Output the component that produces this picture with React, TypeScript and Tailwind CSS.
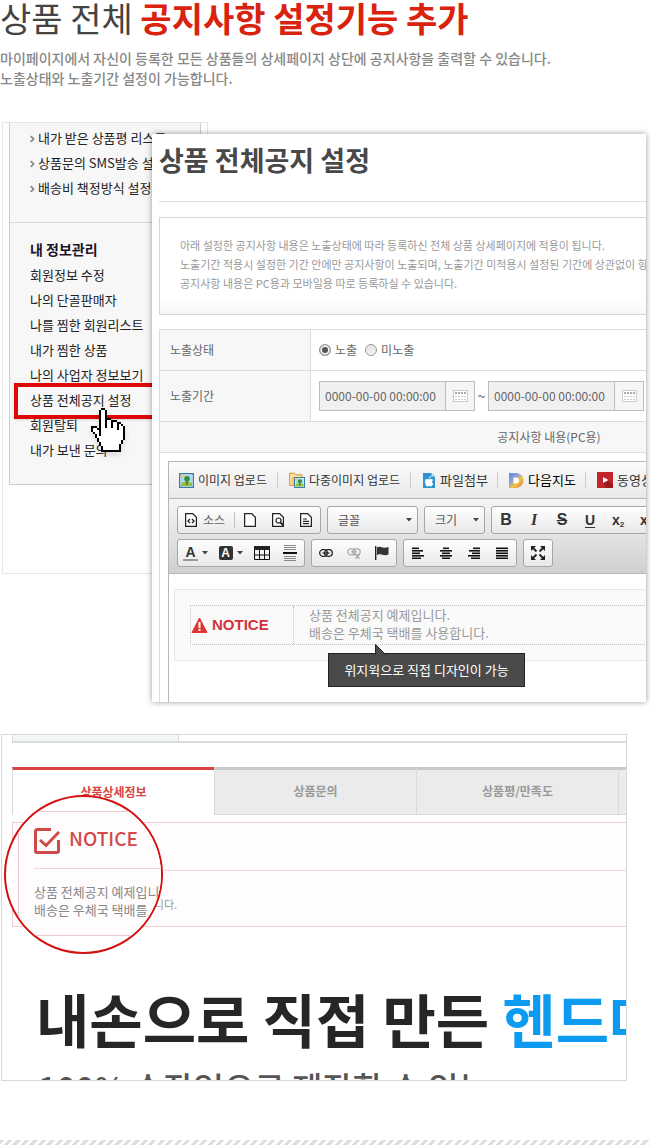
import { useState, type ReactNode } from "react";
import clsx from "clsx";

const sideLinks = ["내가 받은 상품평 리스트", "상품문의 SMS발송 설정", "배송비 책정방식 설정"];

const infoLinks = [
    "회원정보 수정",
    "나의 단골판매자",
    "나를 찜한 회원리스트",
    "내가 찜한 상품",
    "나의 사업자 정보보기",
    "상품 전체공지 설정",
    "회원탈퇴",
    "내가 보낸 문의",
];

const detailTabs = ["상품상세정보", "상품문의", "상품평/만족도", ""];

// X = outline, . = fill
const handPixels = [
    "     XX",
    "    X..X",
    "    X..X",
    "    X..X",
    "    X..X",
    "    X..XXX",
    "    X..X..XXX",
    "    X..X..X..XX",
    "    X..X..X..X.X",
    "XXX X..X..X..X..X",
    "X..XX........X..X",
    "X...X...........X",
    " X..X...........X",
    "  X.X...........X",
    "  X.............X",
    "   X............X",
    "   X...........X",
    "    X..........X",
    "    X.........X",
    "     X........X",
    "     X........X",
    "     XXXXXXXXXX",
];

function HandCursor() {
    return (
        <svg
            width="34"
            height="44"
            viewBox="0 0 17 22"
            shapeRendering="crispEdges"
            className="absolute left-[81px] top-[285px] drop-shadow-md"
            aria-hidden="true"
        >
            {handPixels.flatMap((row, y) =>
                row.split("").map((c, x) =>
                    c === " " ? null : (
                        <rect key={`${x}-${y}`} x={x} y={y} width="1" height="1" fill={c === "X" ? "#000" : "#fff"} />
                    )
                )
            )}
        </svg>
    );
}

function Icon({ children, w = 16, h = 16 }: { children: ReactNode; w?: number; h?: number }) {
    return (
        <svg width={w} height={h} viewBox={`0 0 ${w} ${h}`} fill="none" className="shrink-0" aria-hidden="true">
            {children}
        </svg>
    );
}

function Caret() {
    return (
        <Icon w={6} h={4}>
            <path d="M0 0h6L3 3.5z" fill="#444" />
        </Icon>
    );
}

function PageIcon({ children }: { children?: ReactNode }) {
    return (
        <Icon w={12} h={14}>
            <path d="M.6.6h7L11.400 4.400v9H.6z" stroke="#222" strokeWidth="1.300" fill="#fff" />
            {children}
        </Icon>
    );
}

function TreePicture({ x, y, s }: { x: number; y: number; s: number }) {
    return (
        <g transform={`translate(${x} ${y}) scale(${s / 15})`}>
            <rect x=".7" y=".7" width="13.6" height="13.6" fill="#fff" stroke="#3f7ba3" strokeWidth="1.4" />
            <rect x="2" y="2" width="11" height="11" fill="#a9dcf3" />
            <path d="M2 2h4L2 6z" fill="#f6c453" />
            <path d="M2 10c4-2 7-2 11 0v3H2z" fill="#8cc63f" />
            <path d="M7.3 7h1.2v5H7.3z" fill="#6b4a1e" />
            <circle cx="8" cy="5.8" r="2.8" fill="#2f8f3a" />
        </g>
    );
}

function Group({ children, className }: { children: ReactNode; className?: string }) {
    return (
        <div
            className={clsx(
                "flex h-7 shrink-0 items-center rounded-[3px] border border-[#a6a6a6] bg-gradient-to-b from-white to-[#e8e8e8]",
                className
            )}
        >
            {children}
        </div>
    );
}

function ToolButton({ label, children, wide }: { label: string; children: ReactNode; wide?: boolean }) {
    return (
        <button
            type="button"
            aria-label={label}
            className={clsx("flex h-full items-center justify-center gap-1", wide ? "w-[35px]" : "w-7")}
        >
            {children}
        </button>
    );
}

function ToolSelect({ label, className }: { label: string; className: string }) {
    return (
        <Group className={clsx("relative", className)}>
            <select aria-label={label} className="h-full w-full appearance-none pl-[10px] text-xs text-[#555] outline-none">
                <option>{label}</option>
            </select>
            <span className="pointer-events-none absolute right-[5px]">
                <Caret />
            </span>
        </Group>
    );
}

function AlignIcon({ rows }: { rows: [number, number][] }) {
    return (
        <Icon w={12} h={12}>
            {rows.map(([x, w], i) => (
                <rect key={i} x={x} y={i * 2.5 + 0.5} width={w} height="1.6" fill="#111" />
            ))}
        </Icon>
    );
}

function UploadBar() {
    const item = "flex items-center gap-1 border-r border-[#ccc] h-4";
    return (
        <div className="flex h-[38px] items-center border-y border-[#b6b6b6] bg-gradient-to-b from-[#fbfbfb] to-[#e9e9e9] pl-[10px] text-xs text-[#333]">
            <button type="button" className={clsx(item, "w-[99px]")}>
                <Icon w={15} h={15}>
                    <TreePicture x={0} y={0} s={15} />
                </Icon>
                이미지 업로드
            </button>
            <button type="button" className={clsx(item, "w-[133px] pl-[11px]")}>
                <Icon>
                    <path d="M.6 1.200h5l1.400 1.600h6v10.600H.6z" fill="#fbe3a0" stroke="#d39a2e" />
                    <path d="M2.500 5h10v7.500h-10z" fill="#f4c964" />
                    <TreePicture x={5} y={5} s={11} />
                </Icon>
                다중이미지 업로드
            </button>
            <button type="button" className={clsx(item, "w-[87px] pl-[11px] text-[13px]")}>
                <Icon w={14} h={15}>
                    <path d="M1 0h8.500L13 3.500V15H1z" fill="#2f94d3" />
                    <path d="M9.500 0L13 3.500H9.500z" fill="#bfe3f8" />
                    <path d="M3 8.200c0-1.400 1-2.200 2.200-2.200 1 0 1.400.4 2 .4s1-.4 2-.4c.9 0 1.500.4 1.900 1-1.600 1-1.300 3 .2 3.600-.5 1.500-1.400 2.900-2.400 2.900-.6 0-.9-.4-1.700-.4s-1.100.4-1.700.4C4.100 13.500 3 10.600 3 8.200z" fill="#fff" />
                    <path d="M7 5.500c0-1.300.8-2.200 2-2.400 0 1.300-.8 2.300-2 2.400z" fill="#fff" />
                </Icon>
                파일첨부
            </button>
            <button type="button" className={clsx(item, "w-[88px] pl-[11px] text-[13px] text-black")}>
                <Icon w={15} h={15}>
                    <defs>
                        <linearGradient id="daum" x1="0" y1="0" x2="1" y2="1">
                            <stop offset="0" stopColor="#4d8fe0" />
                            <stop offset=".35" stopColor="#8f9fdc" />
                            <stop offset=".6" stopColor="#f0c53c" />
                            <stop offset="1" stopColor="#ee6a4e" />
                        </linearGradient>
                    </defs>
                    <path d="M0 0h7a7.500 7.500 0 0 1 0 15H0z" fill="url(#daum)" />
                    <path d="M4.500 4.500H7a3 3 0 0 1 0 6H4.500z" fill="#fff" />
                </Icon>
                다음지도
            </button>
            <button type="button" className="flex h-4 items-center gap-1 pl-[11px] text-[13px]">
                <Icon>
                    <rect width="16" height="16" fill="#c4242b" />
                    <path d="M11 8l5 5v3H9L6 11z" fill="#991a20" />
                    <path d="M6 5l5.500 3L6 11z" fill="#fff" />
                </Icon>
                동영상
            </button>
        </div>
    );
}

function EditorToolbar() {
    return (
        <div className="flex h-[75px] flex-col gap-[5px] border-b border-[#b6b6b6] bg-gradient-to-b from-[#f5f5f5] to-[#cfd1cf] pt-[7px] pl-2">
            <div className="flex gap-1.5">
                <Group>
                    <button type="button" className="flex h-full w-14 items-center gap-1.5 pl-[7px] text-xs text-[#666]">
                        <PageIcon>
                            <path d="M5 6L3 8l2 2M7 6l2 2-2 2" stroke="#222" strokeWidth="1.300" />
                        </PageIcon>
                        소스
                    </button>
                    <span className="mr-px h-4 w-px bg-[#c0c0c0]" />
                    <ToolButton label="새 문서">
                        <PageIcon />
                    </ToolButton>
                    <ToolButton label="미리보기">
                        <PageIcon>
                            <circle cx="6.500" cy="7.500" r="2.500" stroke="#222" strokeWidth="1.200" />
                            <path d="M8.500 9.500l3 3" stroke="#222" strokeWidth="1.800" />
                        </PageIcon>
                    </ToolButton>
                    <ToolButton label="템플릿">
                        <PageIcon>
                            <path d="M3 6h4M3 8.300h6M3 10.600h6" stroke="#222" strokeWidth="1.200" />
                        </PageIcon>
                    </ToolButton>
                </Group>
                <ToolSelect label="글꼴" className="w-[91px]" />
                <ToolSelect label="크기" className="w-[61px]" />
                <Group className="font-[Liberation_Sans,sans-serif] text-base font-bold text-[#333]">
                    <ToolButton label="굵게">B</ToolButton>
                    <ToolButton label="기울임">
                        <span className="font-[Liberation_Serif,serif] italic">I</span>
                    </ToolButton>
                    <ToolButton label="취소선">
                        <span className="line-through">S</span>
                    </ToolButton>
                    <ToolButton label="밑줄">
                        <span className="text-sm underline underline-offset-2">U</span>
                    </ToolButton>
                    <ToolButton label="아래 첨자">
                        <span className="text-sm">
                            x<sub className="text-[8px]">2</sub>
                        </span>
                    </ToolButton>
                    <ToolButton label="위 첨자">
                        <span className="text-sm">
                            x<sup className="text-[8px]">2</sup>
                        </span>
                    </ToolButton>
                </Group>
            </div>
            <div className="flex gap-1.5">
                <Group>
                    <ToolButton label="글자색" wide>
                        <span className="w-[15px] border-b-2 border-[#999] text-center font-[Liberation_Sans,sans-serif] text-sm leading-[13px] font-bold text-[#333]">
                            A
                        </span>
                        <Caret />
                    </ToolButton>
                    <ToolButton label="배경색" wide>
                        <span className="h-[14px] w-[14px] rounded-[2px] bg-[#333] text-center font-[Liberation_Sans,sans-serif] text-xs leading-[14px] font-bold text-white">
                            A
                        </span>
                        <Caret />
                    </ToolButton>
                    <ToolButton label="표">
                        <Icon w={16} h={14}>
                            <path d="M.5.500h15v13H.500zM.5 9h15M5.500 4v9.500M10.500 4v9.500" stroke="#111" />
                            <path d="M0 0h16v4H0z" fill="#222" />
                        </Icon>
                    </ToolButton>
                    <ToolButton label="가로줄">
                        <Icon w={14} h={16}>
                            <path d="M1 .5h12M1 2.500h12M1 4.500h12M1 11.500h12M1 13.500h12M1 15.500h12" stroke="#888" />
                            <path d="M0 8h14" stroke="#111" strokeWidth="2" />
                        </Icon>
                    </ToolButton>
                </Group>
                <Group>
                    <ToolButton label="링크">
                        <Icon w={14} h={8}>
                            <rect x=".7" y=".7" width="7.600" height="6.600" rx="3.200" stroke="#222" strokeWidth="1.300" />
                            <rect x="5.700" y=".7" width="7.600" height="6.600" rx="3.200" stroke="#222" strokeWidth="1.300" />
                            <path d="M3.500 4h7" stroke="#222" strokeWidth="1.300" />
                        </Icon>
                    </ToolButton>
                    <ToolButton label="링크 해제">
                        <Icon w={14} h={12}>
                            <rect x=".8" y="1.800" width="7.400" height="6" rx="3" stroke="#aaa" strokeWidth="1.300" />
                            <rect x="5.800" y="1.800" width="7.400" height="6" rx="3" stroke="#aaa" strokeWidth="1.300" />
                            <path d="M4 4.800h6M8.500 7.500l4 4M12.500 7.500l-4 4" stroke="#aaa" strokeWidth="1.300" />
                        </Icon>
                    </ToolButton>
                    <ToolButton label="책갈피">
                        <Icon w={14} h={14}>
                            <path d="M.7 0v14" stroke="#222" strokeWidth="1.400" />
                            <path d="M2 1.500c3-2 5 1.500 11.500-.500v7.500C8 10.500 6 7 2 9z" fill="#333" />
                        </Icon>
                    </ToolButton>
                </Group>
                <Group>
                    <ToolButton label="왼쪽 정렬">
                        <AlignIcon rows={[[0, 7], [0, 11], [0, 8], [0, 12], [0, 9]]} />
                    </ToolButton>
                    <ToolButton label="가운데 정렬">
                        <AlignIcon rows={[[3, 6], [0, 12], [2, 8], [0, 12], [2, 8]]} />
                    </ToolButton>
                    <ToolButton label="오른쪽 정렬">
                        <AlignIcon rows={[[5, 7], [1, 11], [4, 8], [0, 12], [3, 9]]} />
                    </ToolButton>
                    <ToolButton label="양쪽 정렬">
                        <AlignIcon rows={[[0, 12], [0, 12], [0, 12], [0, 12], [0, 12]]} />
                    </ToolButton>
                </Group>
                <Group>
                    <ToolButton label="최대화">
                        <Icon w={14} h={14}>
                            <path d="M0 0h5L0 5zM14 0v5L9 0zM0 14V9l5 5zM14 14H9l5-5z" fill="#222" />
                            <path d="M1 1l4.500 4.500M13 1L8.500 5.500M1 13l4.500-4.500M13 13L8.500 8.500" stroke="#222" strokeWidth="1.800" />
                        </Icon>
                    </ToolButton>
                </Group>
            </div>
        </div>
    );
}

function DateField({ id }: { id: string }) {
    return (
        <div className="flex h-[30px] border border-[#bdbdbd] bg-[#f0f0f0]">
            <input
                id={id}
                aria-label="노출기간"
                defaultValue="0000-00-00 00:00:00"
                className="w-[126px] border-r border-[#bdbdbd] pl-[5px] text-xs text-[#666] outline-none"
            />
            <button type="button" aria-label="달력" className="flex w-7 items-center justify-center bg-[#f5f5f5]">
                <Icon w={15} h={12}>
                    <rect x=".5" y=".5" width="14" height="11" fill="#fff" stroke="#ccc" />
                    <path d="M2 3h11" stroke="#aaa" strokeWidth="2" strokeDasharray="2 1" />
                    <path d="M2 6.500h11M2 9.500h11" stroke="#ccc" strokeDasharray="2 1" />
                </Icon>
            </button>
        </div>
    );
}

function EditorBody() {
    return (
        <div className="relative h-[128px] pt-[15px] pl-[5px]">
            <div className="h-[72px] border border-[#e8e8e8] bg-[#fafafa] p-[15px] pr-0">
                <div className="flex h-10 border border-dotted border-[#c4c4c4]">
                    <div className="flex w-[103px] items-center gap-1 border-r border-dotted border-[#c4c4c4] font-[Liberation_Sans,sans-serif] text-[15px] font-bold text-[#d2323c]">
                        <Icon w={17} h={16}>
                            <path d="M8.500 1L16 15.500H1z" fill="#e03434" stroke="#e03434" strokeLinejoin="round" />
                            <path d="M8.500 5v6M8.500 12v2" stroke="#fff" strokeWidth="2" />
                        </Icon>
                        NOTICE
                    </div>
                    <p className="pl-[15px] text-[13px] leading-[18px] text-[#999]">
                        상품 전체공지 예제입니다.
                        <br />
                        배송은 우체국 택배를 사용합니다.
                    </p>
                </div>
            </div>
            <div
                role="tooltip"
                className="absolute top-[79px] left-[159px] flex h-[34px] w-[197px] items-center justify-center border border-[#222] bg-[#4a4a4a] text-[13px] text-white"
            >
                위지윅으로 직접 디자인이 가능
                <svg width="12" height="11" viewBox="0 0 12 11" className="absolute -top-[10px] left-[46px]" aria-hidden="true">
                    <path d="M.5 11V.5L11 11" fill="#4a4a4a" stroke="#222" />
                </svg>
            </div>
        </div>
    );
}

function NoticeDialog() {
    const [visible, setVisible] = useState(true);
    const radio =
        "size-3 appearance-none rounded-full border border-[#999] bg-gradient-to-b from-[#e4e4e4] to-[#f4f4f4] checked:bg-none checked:bg-[#555] checked:shadow-[inset_0_0_0_2px_#eee]";

    return (
        <section className="z-10 col-start-2 row-start-1 mt-3 mr-1 min-w-0 overflow-hidden bg-white pl-[7px] whitespace-nowrap shadow-[0_0_6px_rgba(0,0,0,0.4)]">
            <h2 className="h-[68px] border-b border-[#ddd] pt-1.5 text-[27px] leading-[40px] font-bold text-[#484848]">
                상품 전체공지 설정
            </h2>
            <div className="w-[780px]">
                <p className="mt-[15px] border border-[#d6d6d6] bg-gradient-to-b from-white from-85% to-[#f6f6f6] px-5 pt-[18px] pb-[21px] text-[11px] leading-[19px] text-[#999]">
                    아래 설정한 공지사항 내용은 노출상태에 따라 등록하신 전체 상품 상세페이지에 적용이 됩니다.
                    <br />
                    노출기간 적용시 설정한 기간 안에만 공지사항이 노출되며, 노출기간 미적용시 설정된 기간에 상관없이 항상 노출됩니다.
                    <br />
                    공지사항 내용은 PC용과 모바일용 따로 등록하실 수 있습니다.
                </p>
                <table className="mt-[14px] w-full table-fixed border-collapse border border-b-0 border-[#dcdcdc] text-xs text-[#666]">
                    <colgroup>
                        <col className="w-[151px]" />
                        <col />
                    </colgroup>
                    <tbody>
                        <tr className="h-[41px]">
                            <th className="border border-[#dcdcdc] bg-[#f7f7f7] pl-[10px] text-left font-normal">노출상태</th>
                            <td className="border border-[#dcdcdc] pl-2">
                                <div className="flex items-center gap-2">
                                    <label className="flex items-center gap-1">
                                        <input type="radio" name="state" className={radio} checked={visible} onChange={() => setVisible(true)} />
                                        노출
                                    </label>
                                    <label className="flex items-center gap-1">
                                        <input type="radio" name="state" className={radio} checked={!visible} onChange={() => setVisible(false)} />
                                        미노출
                                    </label>
                                </div>
                            </td>
                        </tr>
                        <tr className="h-[51px]">
                            <th className="border border-[#dcdcdc] bg-[#f7f7f7] pl-[10px] text-left font-normal">노출기간</th>
                            <td className="border border-[#dcdcdc] pl-2">
                                <div className="flex items-center">
                                    <DateField id="from" />
                                    <span className="w-[13px] text-center text-sm">~</span>
                                    <DateField id="to" />
                                </div>
                            </td>
                        </tr>
                        <tr className="h-[31px]">
                            <th colSpan={2} className="border border-[#dcdcdc] bg-[#f7f7f7] text-center font-normal">
                                공지사항 내용(PC용)
                            </th>
                        </tr>
                        <tr>
                            <td colSpan={2} className="pt-2 pl-2">
                                <div className="border-l border-[#b6b6b6]">
                                    <UploadBar />
                                    <EditorToolbar />
                                    <EditorBody />
                                </div>
                            </td>
                        </tr>
                    </tbody>
                </table>
            </div>
        </section>
    );
}

function SideMenu() {
    return (
        <aside className="col-start-1 row-start-1 ml-0.5 h-[452px] w-[206px] border border-[#e6e6e6] px-1.5 whitespace-nowrap">
            <nav className="relative h-[362px] border border-t-0 border-[#ccc] bg-[#f7f7f7] text-[13px] leading-[25px] text-[#222]">
                <ul className="h-[100px] border-b border-[#d9d9d9] pt-[2px] pl-5">
                    {sideLinks.map((text) => (
                        <li key={text} className="flex items-center gap-[3px]">
                            <Icon w={5} h={8}>
                                <path d="M.7 2l2.800 3L.7 8" stroke="#888" strokeWidth="1.800" />
                            </Icon>
                            <a href="#">{text}</a>
                        </li>
                    ))}
                </ul>
                <h3 className="mt-[13px] pl-5 text-sm leading-[26px] font-bold text-[#1c1226]">내 정보관리</h3>
                <ul className="pl-5">
                    {infoLinks.map((text) => (
                        <li key={text}>
                            <a href="#">{text}</a>
                        </li>
                    ))}
                </ul>
                <span className="absolute top-[260px] left-1 h-9 w-[180px] border-4 border-[#dd0808] shadow-sm" />
                <HandCursor />
            </nav>
        </aside>
    );
}

function Magnifier() {
    return (
        <div className="absolute top-[60px] left-[2px] size-[159px] overflow-hidden rounded-full border-2 border-[#d31212] bg-white">
            <div className="mt-[14px] ml-3 h-[125px] w-[200px] border border-[#f0c8cc] bg-[#fffcfd] pt-4 pl-[15px] whitespace-nowrap">
                <div className="flex h-[41px] items-start gap-[9px] border-b border-[#f0d4d4]">
                    <Icon w={26} h={26}>
                        <path d="M17 1.500H3a1.500 1.500 0 0 0-1.500 1.500v20A1.500 1.500 0 0 0 3 24.500h20a1.500 1.500 0 0 0 1.500-1.500V12" stroke="#d14a4a" strokeWidth="3" />
                        <path d="M6 12l6 5.500L25 4" stroke="#d14a4a" strokeWidth="3" />
                    </Icon>
                    <strong className="text-[19px] leading-5 font-medium text-[#d14a4a]">NOTICE</strong>
                </div>
                <p className="mt-[14px] text-[13px] leading-[18px] text-[#888]">
                    상품 전체공지 예제입니다.
                    <br />
                    배송은 우체국 택배를 사용합니다.
                </p>
            </div>
        </div>
    );
}

function DetailPreview() {
    return (
        <section className="relative mt-8 mr-[23px] ml-px h-[347px] overflow-hidden border border-[#d9d9d9] pl-[10px] whitespace-nowrap">
            <div className="h-2 border-b-2 border-[#d8dcdc]">
                <div className="h-full w-[167px] border-x border-[#d4d8dc] bg-[#f3f5f7]" />
            </div>
            <div className="mt-6 flex h-12">
                {detailTabs.map((tab, i) => (
                    <button
                        key={i}
                        type="button"
                        className={clsx(
                            "h-full w-[202px] shrink-0 border-t-[3px] border-l border-l-[#d9d9d9] pb-0.5 text-xs font-bold",
                            i === 0
                                ? "border-t-[#d84444] text-[#d84444]"
                                : "border-b border-t-[#c9c9c9] border-b-[#d9d9d9] bg-[#ebebeb] text-[#999]"
                        )}
                    >
                        {tab}
                    </button>
                ))}
            </div>
            <div className="mt-[7px] h-[105px] border border-r-0 border-[#f2cdd0] bg-[#fffcfd]">
                <div className="h-12 border-b border-[#f5d8da]" />
                <p className="pt-2 pl-3 text-[11px] leading-[17px] text-[#999]">
                    상품 전체공지 예제입니다.
                    <br />
                    배송은 우체국 택배를 사용합니다.
                </p>
            </div>
            <p className="mt-[55px] pl-6 text-[58px] leading-[72px] font-bold text-[#262626]">
                내손으로 직접 만든 <span className="text-[#0c9bf0]">헨드메이드</span>
            </p>
            <p className="mt-[13px] pl-[26px] text-[33px] leading-[40px] font-medium text-[#555]">100% 수작업으로 제작할 수 있는</p>
            <Magnifier />
        </section>
    );
}

export default function App() {
    return (
        <main className="overflow-hidden bg-white font-['Noto_Sans_CJK_KR',sans-serif]">
            <h1 className="text-[34px] leading-[36px] whitespace-nowrap text-[#444]">
                상품 전체 <strong className="font-bold text-[#d9230f]">공지사항 설정기능 추가</strong>
            </h1>
            <p className="mt-3 text-sm leading-5 font-medium text-[#888]">
                마이페이지에서 자신이 등록한 모든 상품들의 상세페이지 상단에 공지사항을 출력할 수 있습니다.
                <br />
                노출상태와 노출기간 설정이 가능합니다.
            </p>
            <div className="mt-[34px] grid grid-cols-[152px_minmax(0,1fr)]">
                <SideMenu />
                <NoticeDialog />
            </div>
            <DetailPreview />
            <div className="mt-[59px] h-[5px] bg-[repeating-linear-gradient(135deg,#dedede_0_3px,#fff_3px_6px)]" />
        </main>
    );
}
